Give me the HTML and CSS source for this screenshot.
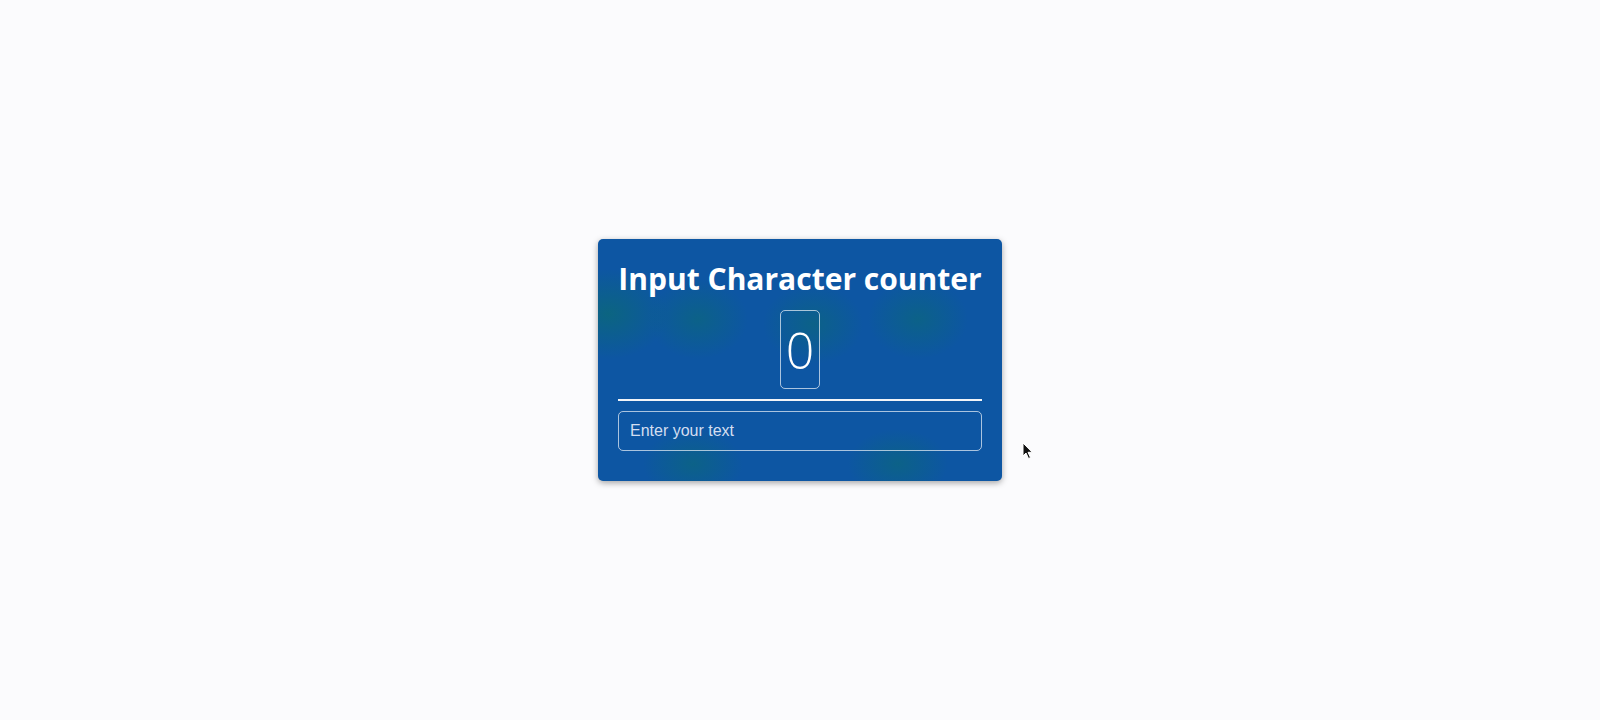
FILE: index.html
```html
<!DOCTYPE html>
<html lang="en">
<head>
<meta charset="utf-8">
<title>Input Character counter</title>
<link rel="stylesheet" href="styles.css">
</head>
<body>
  <main class="card">
    <h1 class="title">Input Character counter</h1>
    <div class="counter"><span class="count">0</span></div>
    <hr class="divider">
    <input class="text-input" type="text" placeholder="Enter your text">
  </main>
  <svg class="pointer" width="12" height="18" viewBox="0 0 12 18" aria-hidden="true">
    <path d="M1 1 L1 14 L4 11 L6.5 16.5 L8.5 15.6 L6 10.3 L10.2 10.3 Z" fill="#111" stroke="#fff" stroke-width="1"/>
  </svg>
</body>
</html>
```

FILE: styles.css
```css
* { box-sizing: border-box; }

html, body {
  margin: 0;
  height: 100%;
}

body {
  background: #fbfbfd;
  display: flex;
  align-items: center;
  justify-content: center;
  font-family: "Open Sans", "Liberation Sans", sans-serif;
}

.card {
  width: 404px;
  padding: 19px 20px 30px;
  border-radius: 5px;
  color: #fff;
  display: flex;
  flex-direction: column;
  align-items: center;
  background:
    radial-gradient(ellipse 60px 45px at 10px 75px, rgba(10, 115, 95, 0.5), transparent),
    radial-gradient(ellipse 50px 40px at 100px 80px, rgba(10, 115, 95, 0.4), transparent),
    radial-gradient(ellipse 50px 40px at 215px 85px, rgba(10, 115, 95, 0.4), transparent),
    radial-gradient(ellipse 50px 40px at 320px 80px, rgba(10, 115, 95, 0.4), transparent),
    radial-gradient(ellipse 50px 35px at 95px 225px, rgba(10, 115, 95, 0.4), transparent),
    radial-gradient(ellipse 50px 35px at 300px 225px, rgba(10, 115, 95, 0.4), transparent),
    #0d56a3;
  box-shadow: 0 2px 6px rgba(0, 0, 0, 0.35);
}

.title {
  margin: 0 0 11px;
  font-size: 30px;
  font-weight: 700;
  line-height: 41px;
  white-space: nowrap;
}

.counter {
  width: 40px;
  height: 79px;
  border: 1px solid rgba(255, 255, 255, 0.65);
  border-radius: 5px;
  display: flex;
  align-items: center;
  justify-content: center;
}

.count {
  font-size: 50px;
  font-weight: 300;
  line-height: 1;
}

.divider {
  align-self: stretch;
  margin: 10px 0 10px;
  border: 0;
  height: 2px;
  background: #f2f4f8;
}

.text-input {
  align-self: stretch;
  height: 40px;
  padding: 0 11px;
  border: 1px solid rgba(255, 255, 255, 0.65);
  border-radius: 5px;
  background: transparent;
  color: #fff;
  font-family: "Liberation Sans", Arial, sans-serif;
  font-size: 16px;
  outline: none;
}

.text-input::placeholder {
  color: #d3def0;
}

.pointer {
  position: absolute;
  left: 1022px;
  top: 442px;
}
```
